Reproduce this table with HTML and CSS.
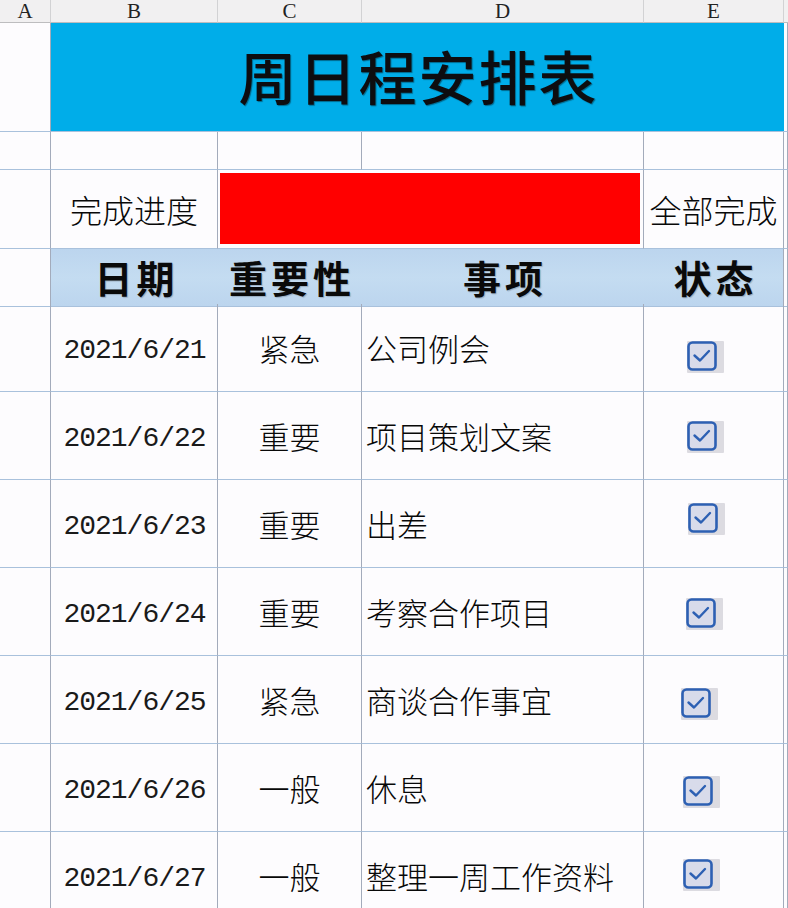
FILE: index.html
```html
<!DOCTYPE html>
<html lang="zh-CN">
<head>
<meta charset="utf-8">
<title>周日程安排表</title>
<link rel="stylesheet" href="styles.css">
</head>
<body>
<div class="sheet">
  <div class="row r-colhdr">
    <div class="ch">A</div><div class="ch">B</div><div class="ch">C</div><div class="ch">D</div><div class="ch">E</div><div class="ch stub"></div>
  </div>
  <div class="row r-title">
    <div class="c"></div>
    <div class="c title">周日程安排表</div>
    <div class="c"></div>
  </div>
  <div class="row r-blank">
    <div class="c"></div><div class="c"></div><div class="c"></div><div class="c"></div><div class="c"></div><div class="c"></div>
  </div>
  <div class="row r-progress">
    <div class="c"></div>
    <div class="c txt big center">完成进度</div>
    <div class="c bar-cell"><div class="bar"></div></div>
    <div class="c txt big center">全部完成</div>
    <div class="c"></div>
  </div>
  <div class="row r-head">
    <div class="c"></div>
    <div class="c hd">日期</div>
    <div class="c hd">重要性</div>
    <div class="c hd">事项</div>
    <div class="c hd last">状态</div>
    <div class="c"></div>
  </div>

  <div class="row r-data">
    <div class="c"></div>
    <div class="c date">2021/6/21</div>
    <div class="c txt center">紧急</div>
    <div class="c txt left">公司例会</div>
    <div class="c chk"><span class="cb cb1"></span></div>
    <div class="c"></div>
  </div>
  <div class="row r-data">
    <div class="c"></div>
    <div class="c date">2021/6/22</div>
    <div class="c txt center">重要</div>
    <div class="c txt left">项目策划文案</div>
    <div class="c chk"><span class="cb cb2"></span></div>
    <div class="c"></div>
  </div>
  <div class="row r-data">
    <div class="c"></div>
    <div class="c date">2021/6/23</div>
    <div class="c txt center">重要</div>
    <div class="c txt left">出差</div>
    <div class="c chk"><span class="cb cb3"></span></div>
    <div class="c"></div>
  </div>
  <div class="row r-data">
    <div class="c"></div>
    <div class="c date">2021/6/24</div>
    <div class="c txt center">重要</div>
    <div class="c txt left">考察合作项目</div>
    <div class="c chk"><span class="cb cb4"></span></div>
    <div class="c"></div>
  </div>
  <div class="row r-data">
    <div class="c"></div>
    <div class="c date">2021/6/25</div>
    <div class="c txt center">紧急</div>
    <div class="c txt left">商谈合作事宜</div>
    <div class="c chk"><span class="cb cb5"></span></div>
    <div class="c"></div>
  </div>
  <div class="row r-data">
    <div class="c"></div>
    <div class="c date">2021/6/26</div>
    <div class="c txt center">一般</div>
    <div class="c txt left">休息</div>
    <div class="c chk"><span class="cb cb6"></span></div>
    <div class="c"></div>
  </div>
  <div class="row r-data">
    <div class="c"></div>
    <div class="c date">2021/6/27</div>
    <div class="c txt center">一般</div>
    <div class="c txt left">整理一周工作资料</div>
    <div class="c chk"><span class="cb cb7"></span></div>
    <div class="c"></div>
  </div>
</div>
</body>
</html>
```

FILE: styles.css
```css
html, body {
  margin: 0;
  padding: 0;
  background: #fdfcfe;
}
body {
  width: 788px;
  height: 908px;
  overflow: hidden;
  font-family: "Noto Sans CJK SC", "Noto Sans", sans-serif;
  color: #111;
}
.sheet {
  display: flex;
  flex-direction: column;
  width: 788px;
}
.row {
  display: grid;
  grid-template-columns: 51px 167px 144px 282px 140px 4px;
}
.c, .ch {
  box-sizing: border-box;
  border-right: 1px solid #a3abbb;
  border-bottom: 1px solid #a9c1dc;
  min-width: 0;
}

/* column header */
.r-colhdr { height: 23px; background: #f1f0f1; }
.ch {
  border-right-color: #d2d2d4;
  border-bottom-color: #bdbdbf;
  font-family: "Liberation Serif", serif;
  font-size: 21px;
  line-height: 22px;
  text-align: center;
  color: #222;
}
.ch.stub { border-right: none; }

/* title */
.r-title { height: 109px; grid-template-columns: 51px 733px 4px; }
.title {
  background: #00ade9;
  border-right: none;
  display: flex;
  align-items: center;
  justify-content: center;
  font-size: 58px;
  font-weight: 500;
  letter-spacing: 2px;
  padding-left: 2px;
  color: #0d0d10;
  text-shadow: 1px 1px 1px rgba(0,0,0,0.4);
  padding-bottom: 4px;
}

.r-blank { height: 38px; }

/* progress */
.r-progress {
  height: 79px;
  grid-template-columns: 51px 167px 426px 140px 4px;
}
.bar-cell {
  padding: 3px 3px 4px 2px;
  display: flex;
}
.bar { flex: 1; background: #ff0000; }

/* header row */
.r-head { height: 55px; }
.hd {
  background: linear-gradient(#bcd5ee, #c4dcf1 50%, #bcd5ee);
  border-right: none;
  display: flex;
  align-items: center;
  justify-content: center;
  font-size: 38px;
  font-weight: 700;
  letter-spacing: 4px;
  padding-left: 4px;
  padding-bottom: 2px;
  color: #0a0a0a;
  text-shadow: 1px 1px 1px rgba(0,0,0,0.2);
}
.hd.last { border-right: 1px solid #a3abbb; }

/* data rows */
.r-data { height: 88px; }
.txt {
  display: flex;
  align-items: center;
  font-size: 31px;
  font-weight: 300;
  line-height: 1;
  color: #080808;
}
.txt.big { font-size: 32px; }
.center { justify-content: center; }
.left { justify-content: flex-start; padding-left: 4px; }
.date {
  display: flex;
  align-items: center;
  justify-content: center;
  font-family: "Liberation Mono", monospace;
  font-size: 28px;
  letter-spacing: -1px;
  padding: 5px 0 0 1px;
  color: #1a1a1a;
}

/* checkboxes */
.chk { display: flex; align-items: flex-start; }
.cb {
  display: block;
  width: 37px;
  height: 32px;
  background:
    url("data:image/svg+xml;utf8,<svg xmlns='http://www.w3.org/2000/svg' width='37' height='32' viewBox='0 0 37 32'><rect x='0' y='0' width='37' height='32' rx='1' fill='%23dcdbe1'/><rect x='1.5' y='1.5' width='27' height='27' rx='4' fill='%23d8dbea' stroke='%232d60b3' stroke-width='2.6'/><path d='M7.5 14.5 L13 19.5 L22 10' fill='none' stroke='%232d60b3' stroke-width='2.4' stroke-linecap='round' stroke-linejoin='round'/></svg>") no-repeat;
}
.cb1 { margin: 37px 0 0 43px; }
.cb2 { margin: 29px 0 0 43px; }
.cb3 { margin: 23px 0 0 44px; }
.cb4 { margin: 30px 0 0 42px; }
.cb5 { margin: 32px 0 0 37px; }
.cb6 { margin: 32px 0 0 39px; }
.cb7 { margin: 27px 0 0 39px; }
```
